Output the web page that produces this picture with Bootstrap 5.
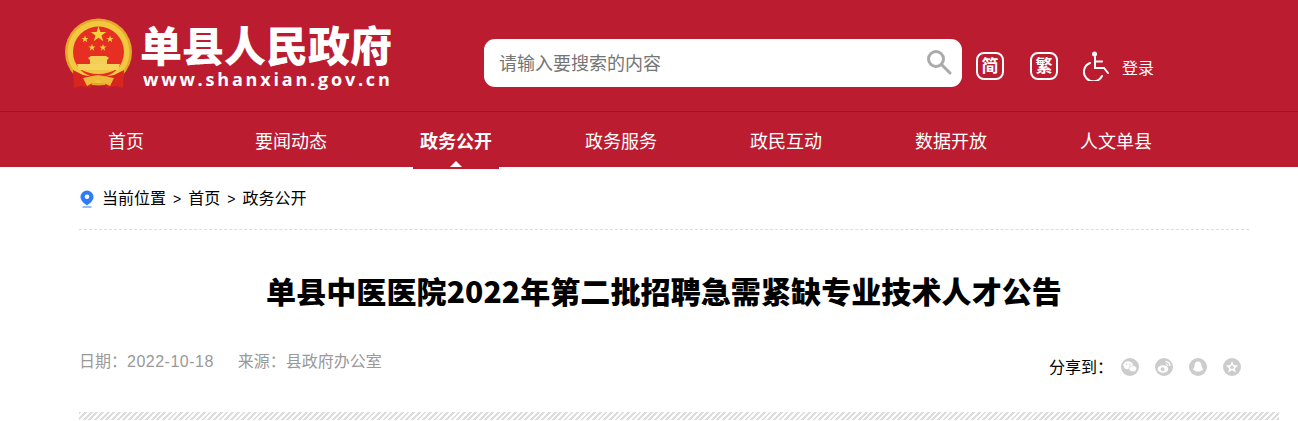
<!DOCTYPE html>
<html lang="zh-CN">
<head>
  <meta charset="UTF-8" />
  <title>单县人民政府</title>
  <link href="https://cdn.jsdelivr.net/npm/bootstrap@5.3.3/dist/css/bootstrap.min.css" rel="stylesheet">
  <style>
    body { font-family: "Liberation Sans", "Noto Sans CJK SC", sans-serif; overflow: hidden; background: #fff; color: #000; }
    .site-top { background: #bb1c2f; height: 112px; border-bottom: 1px solid #9d1627; padding-left: 64px; }
    .emblem { width: 68px; height: 72px; margin-top: 18px; margin-right: 10px; }
    .site-name { color: #fff; width: 252px; margin-top: 26px; }
    .site-name-cn { font-size: 42px; font-weight: 900; line-height: 44px; margin-left: -2px; white-space: nowrap; }
    .site-name-en { font-size: 18px; font-weight: 700; line-height: 18px; letter-spacing: 2.8px; margin-left: 1px; white-space: nowrap; font-family: "Open Sans", sans-serif; }
    .search-box { width: 478px; height: 48px; margin-top: 39px; margin-left: 90px; border-radius: 11px; padding: 0 10px 0 15px; }
    .search-text { font-size: 18px; color: #757575; padding-top: 2px; }
    .lang-box { width: 28px; height: 28px; border: 2px solid #fff; border-radius: 8px; color: #fff; font-size: 17px; font-weight: 700; line-height: 1; padding-top: 1px; }
    .lang-a { margin: 52px 0 0 14px; }
    .lang-b { margin: 52px 0 0 26px; }
    .access-icon { width: 28px; height: 30px; margin: 51px 0 0 25px; }
    .login-link { color: #fff; font-size: 16px; margin: 57px 0 0 11px; line-height: 24px; text-decoration: none; }
    .main-nav { background: #bb1c2f; height: 55px; padding-left: 43.500px; }
    .main-nav-link { width: 165px; height: 55px; line-height: 60px; color: #fff; font-size: 18px; text-align: center; text-decoration: none; position: relative; }
    .main-nav-link.is-on { font-weight: 700; }
    .main-nav-link.is-on::before { content: ""; position: absolute; left: 39.500px; width: 86px; top: 55px; height: 2px; background: #bb1c2f; }
    .main-nav-link.is-on::after { content: ""; position: absolute; left: 76.500px; top: 49px; border: 6px solid transparent; border-top: 0; border-bottom-color: #fff; }
    .page-body { width: 1200px; margin-left: 79px; }
    .crumbs { width: 1170px; height: 63px; border-bottom: 1px dashed #ddd; font-size: 16px; padding-top: 2px; }
    .crumbs svg { width: 16px; height: 18px; margin-right: 7px; }
    .crumb-sep { margin: 0 7px; font-size: 14px; }
    .art-title { width: 1170px; font-family: "Noto Sans CJK SC", sans-serif; font-size: 30px; font-weight: 900; letter-spacing: .1px; line-height: 40px; text-align: center; margin-top: 40px; margin-bottom: 0; }
    .art-meta { width: 1170px; margin-top: 40px; height: 24px; font-size: 16px; color: #999; }
    .art-meta span + span { margin-left: 24px; }
    .art-date { letter-spacing: .5px; }
    .share-icons { margin-top: 12px; }
    .share-label { color: #000; font-size: 16px; margin-right: 8px; }
    .share-icon { width: 18px; height: 18px; margin-right: 16px; margin-top: -2px; }
    .share-icon:last-child { margin-right: 8px; }
    .stripe-bar { height: 8px; margin-top: 38px; background: repeating-linear-gradient(135deg, #ddd 0 2px, #fff 2px 4px); }
  </style>
</head>
<body>

  <div class="site-top d-flex align-items-start">
    <svg class="emblem flex-shrink-0" viewBox="0 0 68 72">
      <circle cx="34.500" cy="34" r="33.500" fill="#e4a928"/>
      <circle cx="34.500" cy="34" r="31" fill="#f2c840"/>
      <circle cx="34.500" cy="34" r="25.500" fill="#e62f22"/>
      <path d="M14 50 Q34 62 55 50 L50 46 L19 46 Z" fill="#f0c543"/>
      <path d="M24 40 L27 38 H42 L45 40 L43 42 V46 H26 V42 Z" fill="#f4cf55"/>
      <path d="M13 46 H56 L54 52 H15 Z" fill="#f4d25c"/>
      <path d="M9 52 L19 57 L29 59 L27 70 L17 68 L10 70 Z" fill="#d8261f"/>
      <path d="M60 52 L50 57 L40 59 L42 70 L52 68 L59 70 Z" fill="#d8261f"/>
      <path d="M19 60 L34 57 L50 60 L46 68 L34 62 L23 68 Z" fill="#eeb838"/>
      <path d="M34.500 8.500 l1.900 5.600 h5.900 l-4.800 3.500 1.800 5.700 -4.800-3.500 -4.800 3.500 1.800-5.700 -4.800-3.500 h5.900 Z" fill="#f7d23f"/>
      <path d="M21 17.500 l.9 2.500 h2.700 l-2.200 1.600 .8 2.600 -2.200-1.600 -2.200 1.600 .8-2.600 -2.200-1.600 h2.700 Z" fill="#f7d23f"/>
      <path d="M46 17.500 l.9 2.500 h2.700 l-2.200 1.600 .8 2.600 -2.200-1.600 -2.200 1.600 .8-2.600 -2.200-1.600 h2.700 Z" fill="#f7d23f"/>
      <path d="M28 26 l.9 2.500 h2.700 l-2.200 1.600 .8 2.600 -2.200-1.600 -2.200 1.600 .8-2.600 -2.200-1.600 h2.700 Z" fill="#f7d23f"/>
      <path d="M39 26 l.9 2.500 h2.700 l-2.200 1.600 .8 2.600 -2.200-1.600 -2.200 1.600 .8-2.600 -2.200-1.600 h2.700 Z" fill="#f7d23f"/>
    </svg>
    <div class="site-name flex-shrink-0">
      <div class="site-name-cn">单县人民政府</div>
      <div class="site-name-en">www.shanxian.gov.cn</div>
    </div>
    <div class="search-box bg-white d-flex align-items-center justify-content-between flex-shrink-0">
      <span class="search-text">请输入要搜索的内容</span>
      <svg width="26" height="26" viewBox="0 0 26 26" fill="none" stroke="#aaa" stroke-width="3"><circle cx="10" cy="9" r="7.500"/><path d="M15.500 14.500 L24 23" stroke-linecap="round"/></svg>
    </div>
    <div class="lang-box lang-a d-flex align-items-center justify-content-center flex-shrink-0">简</div>
    <div class="lang-box lang-b d-flex align-items-center justify-content-center flex-shrink-0">繁</div>
    <svg class="access-icon flex-shrink-0" viewBox="0 0 28 30" fill="none" stroke="#fff" stroke-width="2" stroke-linecap="round">
      <circle cx="11.500" cy="3" r="2.500" fill="#fff" stroke="none"/>
      <path d="M12 6 V17 H21 L25 22"/>
      <path d="M12 10.500 H19"/>
      <path d="M7 12 A9.500 9.500 0 1 0 19 25"/>
    </svg>
    <a class="login-link flex-shrink-0" href="#">登录</a>
  </div>

  <nav class="main-nav d-flex">
    <a class="main-nav-link" href="#">首页</a>
    <a class="main-nav-link" href="#">要闻动态</a>
    <a class="main-nav-link is-on" href="#">政务公开</a>
    <a class="main-nav-link" href="#">政务服务</a>
    <a class="main-nav-link" href="#">政民互动</a>
    <a class="main-nav-link" href="#">数据开放</a>
    <a class="main-nav-link" href="#">人文单县</a>
  </nav>

  <div class="page-body">
    <div class="crumbs d-flex align-items-center">
      <svg viewBox="0 0 16 18"><path d="M8 0.500 A6.500 6.500 0 0 0 1.500 7 C1.500 11 6 14 8 15.500 C10 14 14.500 11 14.500 7 A6.500 6.500 0 0 0 8 0.500 Z" fill="#2f7cf6"/><circle cx="8" cy="6.800" r="2.300" fill="#fff"/><path d="M3.500 16.500 H12.500 V17.500 H3.500 Z" fill="#2f7cf6"/></svg>
      <span>当前位置</span><span class="crumb-sep">&gt;</span><span>首页</span><span class="crumb-sep">&gt;</span><span>政务公开</span>
    </div>

    <h1 class="art-title">单县中医医院2022年第二批招聘急需紧缺专业技术人才公告</h1>

    <div class="art-meta d-flex justify-content-between align-items-center">
      <div><span>日期：<b class="art-date fw-normal">2022-10-18</b></span><span>来源：县政府办公室</span></div>
      <div class="share-icons d-flex align-items-center">
        <span class="share-label">分享到：</span>
        <svg class="share-icon" viewBox="0 0 18 18"><circle cx="9" cy="9" r="9" fill="#ccc"/><ellipse cx="7.200" cy="7.300" rx="4.800" ry="4" fill="#fff"/><circle cx="5.600" cy="6.300" r=".7" fill="#ccc"/><circle cx="8.800" cy="6.300" r=".7" fill="#ccc"/><ellipse cx="11.800" cy="10.700" rx="3.900" ry="3.100" fill="#fff" stroke="#ccc" stroke-width=".7"/></svg>
        <svg class="share-icon" viewBox="0 0 18 18"><circle cx="9" cy="9" r="9" fill="#ccc"/><ellipse cx="8" cy="11" rx="5.300" ry="3.800" fill="#fff"/><circle cx="7.600" cy="11.200" r="1.900" fill="#ccc"/><path d="M10.500 3.500 A4.500 4.500 0 0 1 15 8" fill="none" stroke="#fff" stroke-width="1.300"/><path d="M10.800 6 A2 2 0 0 1 12.800 8" fill="none" stroke="#fff" stroke-width="1"/></svg>
        <svg class="share-icon" viewBox="0 0 18 18"><circle cx="9" cy="9" r="9" fill="#ccc"/><path d="M9 3.500 C11.800 3.500 12.300 6 12.600 8.300 L14 11.500 C13.500 12.800 12.800 12.800 11.800 12 L11.800 13.500 H6.200 L6.200 12 C5.200 12.800 4.500 12.800 4 11.500 L5.400 8.300 C5.700 6 6.200 3.500 9 3.500 Z" fill="#fff"/></svg>
        <svg class="share-icon" viewBox="0 0 18 18"><circle cx="9" cy="9" r="9" fill="#ccc"/><path d="M9 3 l1.800 3.900 4.300.5 -3.200 2.900 .9 4.200 -3.800-2.200 -3.800 2.200 .9-4.200 -3.200-2.900 4.300-.5 Z" fill="#fff"/><circle cx="9" cy="9.300" r="1.700" fill="#ccc"/></svg>
      </div>
    </div>

    <div class="stripe-bar"></div>
  </div>

</body>
</html>
